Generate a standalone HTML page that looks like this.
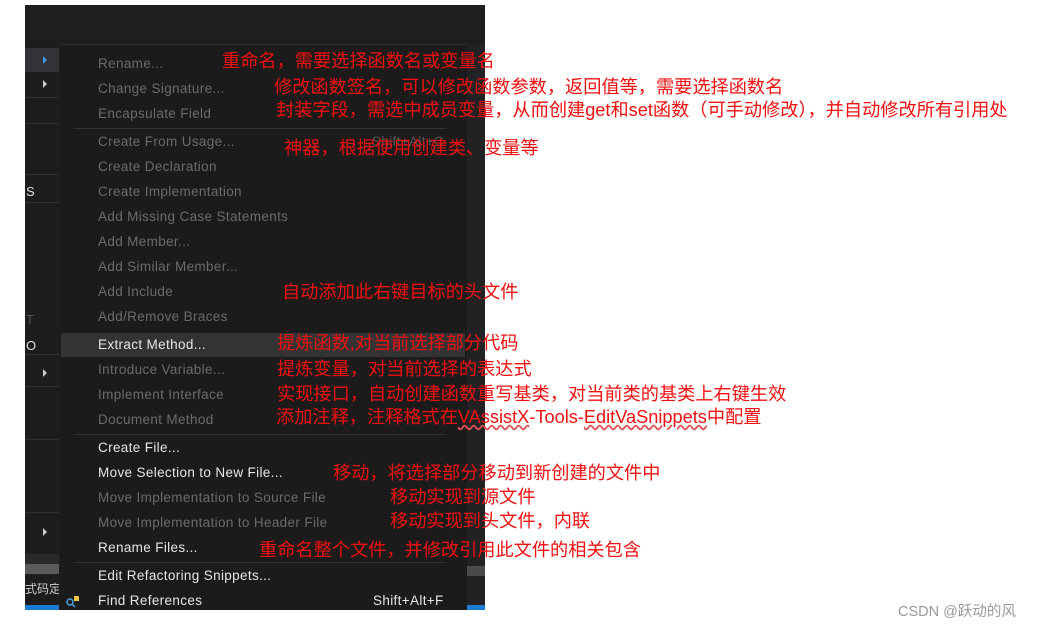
<!DOCTYPE html>
<html><head><meta charset="utf-8"><style>
*{margin:0;padding:0;box-sizing:border-box}
body{width:1050px;height:628px;background:#fff;position:relative;overflow:hidden;font-family:"Liberation Sans","Noto Sans CJK SC",sans-serif}
.abs{position:absolute}
#dark{left:25px;top:5px;width:460px;height:605px;background:#1e1e1f}
#left{left:25px;top:44px;width:34px;height:566px;background:#1d1d1e}
.lsep{position:absolute;left:0;width:34px;height:1px;background:#333}
#menu{left:60px;top:44px;width:407px;height:566px;background:#1b1b1c;border-top:1px solid #2d2d2d}
#strip{left:467px;top:44px;width:18px;height:566px;background:#222224}
.it{position:absolute;left:38px;font-size:13.5px;letter-spacing:0.35px;color:#6b6b6b;white-space:nowrap;line-height:16px}
.en{color:#e6e6e6}
.sep{position:absolute;left:14px;width:372px;height:1px;background:#333}
.r{position:absolute;color:#f01010;font-size:18.2px;white-space:nowrap;line-height:20px;font-family:"Liberation Sans","Noto Sans CJK SC",sans-serif}
.arr{position:absolute;left:18px;width:0;height:0;border-left:4px solid #ccc;border-top:4px solid transparent;border-bottom:4px solid transparent}
</style></head><body>
<div id="dark" class="abs"></div>
<div id="left" class="abs">
 <div style="position:absolute;left:0;top:4px;width:34px;height:24px;background:#333337"></div>
 <div class="arr" style="top:12px;border-left-color:#3c9be0"></div>
 <div class="arr" style="top:36px"></div>
 <div class="lsep" style="top:53px"></div>
 <div class="lsep" style="top:79px"></div>
 <div class="lsep" style="top:130px"></div>
 <div class="lsep" style="top:158px"></div>
 <div style="position:absolute;left:1px;top:140px;color:#ddd;font-size:13px">S</div>
 <div style="position:absolute;left:1px;top:268px;color:#555;font-size:13px">T</div>
 <div style="position:absolute;left:1px;top:294px;color:#ddd;font-size:13px">O</div>
 <div class="lsep" style="top:310px"></div>
 <div class="arr" style="top:325px"></div>
 <div class="lsep" style="top:342px"></div>
 <div class="lsep" style="top:395px"></div>
 <div class="lsep" style="top:468px"></div>
 <div class="arr" style="top:484px"></div>
 <div style="position:absolute;left:0;top:510px;width:34px;height:10px;background:#2a2a2c"></div>
 <div style="position:absolute;left:0;top:520px;width:34px;height:10px;background:#5a5a5c"></div>
 <div style="position:absolute;left:0;top:536px;color:#ccc;font-size:12px;white-space:nowrap;overflow:hidden;width:34px">式码定</div>
 <div style="position:absolute;left:0;top:561px;width:34px;height:5px;background:#1a7bd0"></div>
</div>
<div id="menu" class="abs">
 <div class="it" style="top:11px">Rename...</div>
 <div class="it" style="top:36px">Change Signature...</div>
 <div class="it" style="top:61px">Encapsulate Field</div>
 <div class="sep" style="top:83px"></div>
 <div class="it" style="top:89px">Create From Usage...</div>
 <div class="it" style="top:89px;left:312px;color:#555">Shift+Alt+C</div>
 <div class="it" style="top:114px">Create Declaration</div>
 <div class="it" style="top:139px">Create Implementation</div>
 <div class="it" style="top:164px">Add Missing Case Statements</div>
 <div class="it" style="top:189px">Add Member...</div>
 <div class="it" style="top:214px">Add Similar Member...</div>
 <div class="it" style="top:239px">Add Include</div>
 <div class="it" style="top:264px">Add/Remove Braces</div>
 <div style="position:absolute;left:1px;top:288px;width:404px;height:24px;background:#333335"></div>
 <div class="it en" style="top:292px">Extract Method...</div>
 <div class="it" style="top:317px">Introduce Variable...</div>
 <div class="it" style="top:342px">Implement Interface</div>
 <div class="it" style="top:367px">Document Method</div>
 <div class="sep" style="top:389px"></div>
 <div class="it en" style="top:395px">Create File...</div>
 <div class="it en" style="top:420px">Move Selection to New File...</div>
 <div class="it" style="top:445px">Move Implementation to Source File</div>
 <div class="it" style="top:470px">Move Implementation to Header File</div>
 <div class="it en" style="top:495px">Rename Files...</div>
 <div class="sep" style="top:517px"></div>
 <div class="it en" style="top:523px">Edit Refactoring Snippets...</div>
 <div class="it en" style="top:548px">Find References</div>
 <div class="it en" style="top:548px;left:313px">Shift+Alt+F</div>
 <svg style="position:absolute;left:5px;top:548px" width="16" height="16"><circle cx="5" cy="9" r="3" fill="none" stroke="#4aa0e0" stroke-width="1.5"/><line x1="7" y1="11" x2="10" y2="14" stroke="#4aa0e0" stroke-width="1.5"/><rect x="9" y="3" width="5" height="5" fill="#f0c040"/></svg>
</div>
<div id="strip" class="abs">
 <div style="position:absolute;left:0;top:522px;width:18px;height:10px;background:#4a4a4c"></div>
 <div style="position:absolute;left:0;top:561px;width:18px;height:5px;background:#1a7bd0"></div>
</div>
<div class="r" style="left:222px;top:51px">重命名，需要选择函数名或变量名</div>
<div class="r" style="left:274px;top:77px">修改函数签名，可以修改函数参数，返回值等，需要选择函数名</div>
<div class="r" style="left:276px;top:100px">封装字段，需选中成员变量，从而创建get和set函数（可手动修改），并自动修改所有引用处</div>
<div class="r" style="left:284px;top:138px">神器，根据使用创建类、变量等</div>
<div class="r" style="left:282px;top:282px">自动添加此右键目标的头文件</div>
<div class="r" style="left:277px;top:333px">提炼函数,对当前选择部分代码</div>
<div class="r" style="left:277px;top:359px">提炼变量，对当前选择的表达式</div>
<div class="r" style="left:277px;top:384px">实现接口，自动创建函数重写基类，对当前类的基类上右键生效</div>
<div class="r" style="left:276px;top:407px">添加注释，注释格式在<span style="text-decoration:underline wavy #e05050">VAssistX</span>-Tools-<span style="text-decoration:underline wavy #e05050">EditVaSnippets</span>中配置</div>
<div class="r" style="left:333px;top:463px">移动，将选择部分移动到新创建的文件中</div>
<div class="r" style="left:390px;top:487px">移动实现到源文件</div>
<div class="r" style="left:390px;top:511px">移动实现到头文件，内联</div>
<div class="r" style="left:259px;top:540px">重命名整个文件，并修改引用此文件的相关包含</div>
<div class="abs" style="left:898px;top:600px;font-size:14.5px;color:#999;white-space:nowrap">CSDN @跃动的风</div>
</body></html>
